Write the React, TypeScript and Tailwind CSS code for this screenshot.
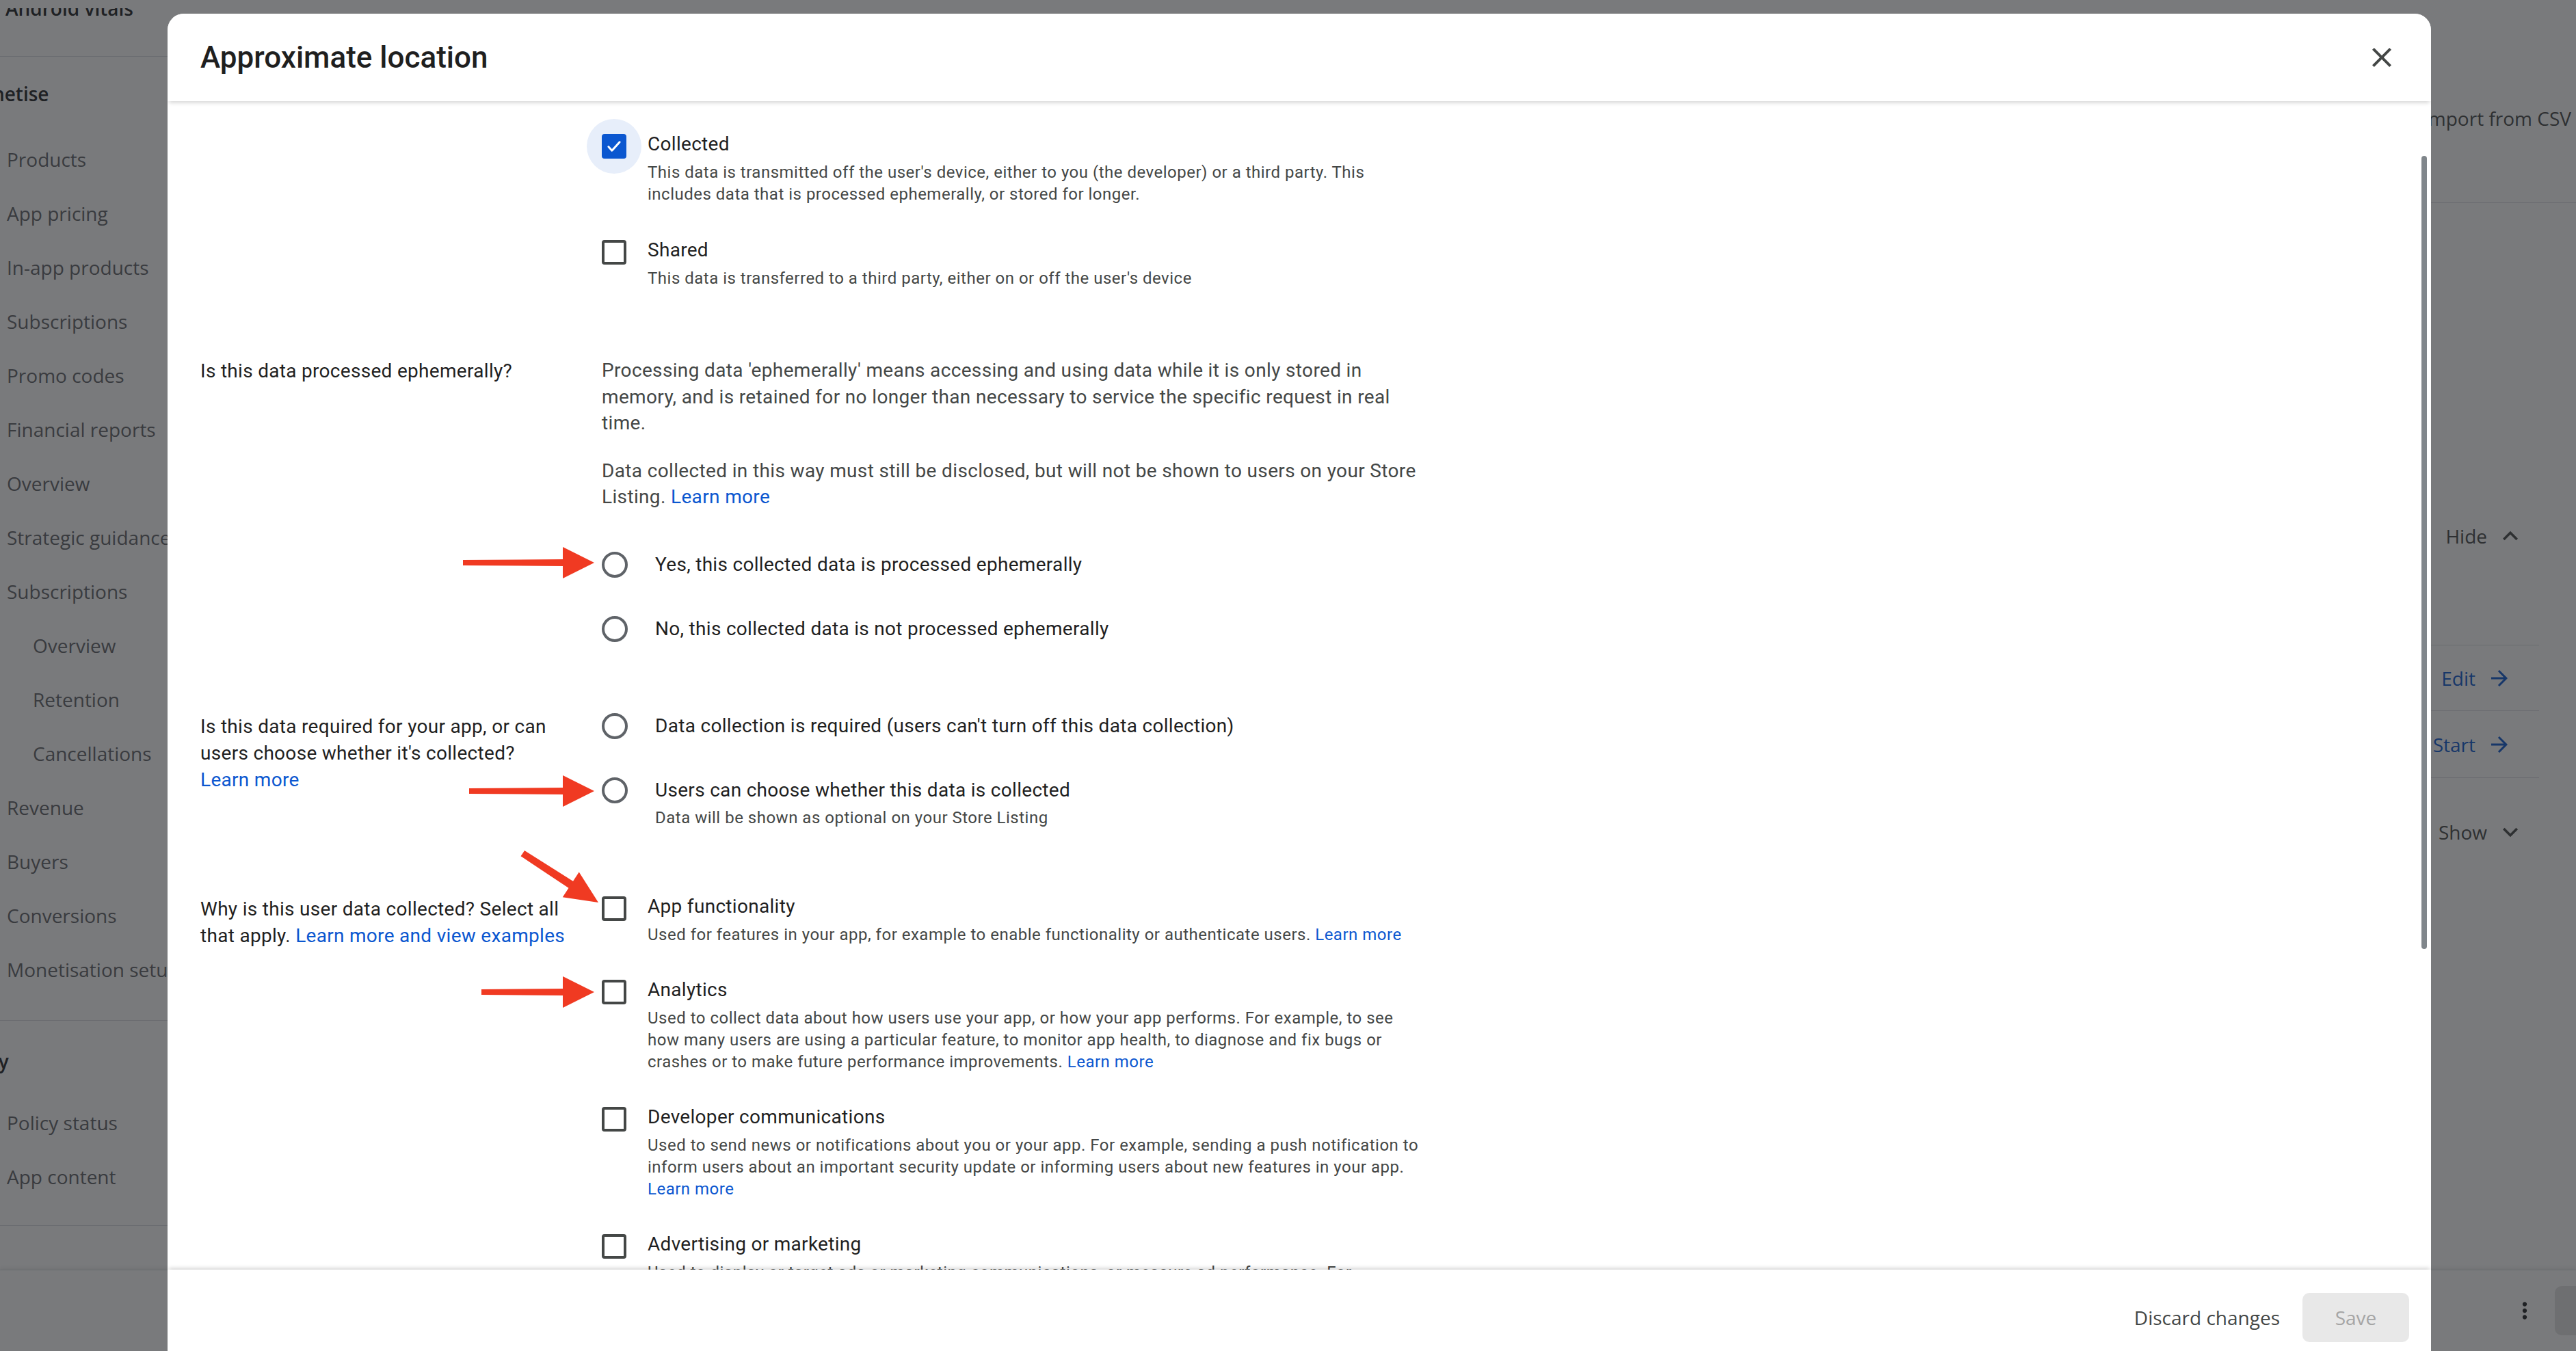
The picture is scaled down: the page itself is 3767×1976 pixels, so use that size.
import type { ReactNode } from 'react';

const NAV_ITEMS = [
  { label: 'Products' },
  { label: 'App pricing' },
  { label: 'In-app products' },
  { label: 'Subscriptions' },
  { label: 'Promo codes' },
  { label: 'Financial reports' },
  { label: 'Overview' },
  { label: 'Strategic guidance' },
  { label: 'Subscriptions' },
  { label: 'Overview', indent: true },
  { label: 'Retention', indent: true },
  { label: 'Cancellations', indent: true },
  { label: 'Revenue' },
  { label: 'Buyers' },
  { label: 'Conversions' },
  { label: 'Monetisation setup' },
];

function Checkbox({ checked = false }: { checked?: boolean }) {
  return (
    <div className="relative mt-[4px] h-[36px] w-[36px] shrink-0">
      {checked && <div className="absolute -left-[22px] -top-[22px] h-[80px] w-[80px] rounded-full bg-[#e7eefa]" />}
      {checked ? (
        <div className="relative flex h-full w-full items-center justify-center rounded-[4px] bg-[#0b57d0]">
          <svg width="30" height="30" viewBox="0 0 24 24" fill="none">
            <path d="M5.5 12.5l4 4.5L18.5 7" stroke="white" strokeWidth="2.4" strokeLinecap="round" strokeLinejoin="round" />
          </svg>
        </div>
      ) : (
        <div className="h-full w-full rounded-[4px] border-[4px] border-[#444746]" />
      )}
    </div>
  );
}

function CheckOption({ label, checked, children }: { label: string; checked?: boolean; children: ReactNode }) {
  return (
    <div className="flex gap-[31px]">
      <Checkbox checked={checked} />
      <div className="flex-1">
        <div className="text-[28px] leading-[38px] tracking-[0.3px] text-[#1f1f1f]">{label}</div>
        <div className="mt-[6px] text-[24px] leading-[32px] tracking-[0.5px] text-[#444746]">{children}</div>
      </div>
    </div>
  );
}

function Radio({ label, desc }: { label: string; desc?: string }) {
  return (
    <div className="flex gap-[40px]">
      <div className="h-[38px] w-[38px] shrink-0 rounded-full border-[4px] border-[#5f6368]" />
      <div>
        <div className="text-[28px] leading-[38px] tracking-[0.3px] text-[#1f1f1f]">{label}</div>
        {desc && <div className="mt-[5px] text-[24px] leading-[32px] tracking-[0.5px] text-[#444746]">{desc}</div>}
      </div>
    </div>
  );
}

function Link({ children, block = false }: { children: ReactNode; block?: boolean }) {
  return <a className={`text-[#0b57d0] ${block ? 'block' : ''}`}>{children}</a>;
}

function Section({ label, className = '', children }: { label?: ReactNode; className?: string; children: ReactNode }) {
  return (
    <div className={`flex ${className}`}>
      <div className="w-[587px] shrink-0 pr-[42px] text-[28px] leading-[39px] tracking-[0.3px] text-[#1f1f1f]">{label}</div>
      <div className="w-[1196px]">{children}</div>
    </div>
  );
}

function Annotations() {
  const straight = (x1: number, tip: number, y: number) => (
    <g>
      <polygon points={`${x1},${y - 4} ${tip - 44},${y - 5} ${tip - 44},${y + 5} ${x1},${y + 4}`} fill="#f03a22" />
      <polygon points={`${tip - 46},${y - 23} ${tip},${y} ${tip - 46},${y + 23}`} fill="#f03a22" />
    </g>
  );
  return (
    <svg className="pointer-events-none absolute left-0 top-0" width="3767" height="1976">
      {straight(677, 869, 823)}
      {straight(686, 869, 1157)}
      {straight(704, 869, 1451)}
      <g transform="translate(875 1320) rotate(33)">
        <polygon points="-132,-5 -44,-6 -44,6 -132,5" fill="#f03a22" />
        <polygon points="-48,-22 0,0 -48,22" fill="#f03a22" />
      </g>
    </svg>
  );
}

export default function App() {
  return (
    <div className="relative h-screen w-full overflow-hidden bg-white font-['Open_Sans',sans-serif]">
      {/* page behind the dialog */}
      <div className="flex h-full">
        <nav className="flex w-[600px] shrink-0 flex-col">
          <div className="h-[83px] border-b border-[#dadce0] pt-[12px]">
            <div className="h-[11px] overflow-hidden pl-[8px]">
              <div className="-mt-[19px] text-[28px] font-semibold leading-[38px] text-[#202124]">Android vitals</div>
            </div>
          </div>
          <div className="border-b border-[#dadce0] pb-[35px] pt-[35px]">
            <div className="-ml-[54px] mb-[37px] text-[28px] font-semibold leading-[38px] text-[#202124]">Monetise</div>
            {NAV_ITEMS.map((item, i) => (
              <div
                key={i}
                className={`flex h-[79px] items-center whitespace-nowrap text-[28px] font-medium text-[#5f6368] ${item.indent ? 'pl-[48px]' : 'pl-[10px]'}`}
              >
                {item.label}
              </div>
            ))}
          </div>
          <div className="border-b border-[#dadce0] pb-[32px] pt-[40px]">
            <div className="-ml-[66px] mb-[31px] text-[28px] font-semibold leading-[38px] text-[#202124]">Policy</div>
            <div className="flex h-[79px] items-center pl-[10px] text-[28px] font-medium text-[#5f6368]">Policy status</div>
            <div className="flex h-[79px] items-center pl-[10px] text-[28px] font-medium text-[#5f6368]">App content</div>
          </div>
        </nav>

        <main className="flex flex-1 flex-col">
          <div className="flex h-[297px] justify-end border-b border-[#dadce0] pr-[7px] pt-[154px]">
            <span className="text-[28px] font-medium leading-[38px] text-[#444746]">Import from CSV</span>
          </div>
          <div className="mr-[54px] flex flex-col">
            <div className="flex h-[647px] justify-end border-b border-[#dadce0] pr-[20px] pt-[468px]">
              <div className="flex h-[38px] items-center gap-[12px] text-[28px] font-medium text-[#444746]">
                Hide
                <svg width="44" height="44" viewBox="0 0 24 24" fill="#444746">
                  <path d="M12 8l-6 6 1.41 1.41L12 10.83l4.59 4.58L18 14z" />
                </svg>
              </div>
            </div>
            {['Edit', 'Start'].map((t, i) => (
              <div
                key={t}
                className={`flex items-center justify-end border-b border-[#dadce0] pr-[40px] ${i === 0 ? 'h-[96px]' : 'h-[98px]'}`}
              >
                <div className="flex items-center gap-[17px] text-[28px] font-medium text-[#0b57d0]">
                  {t}
                  <svg width="36" height="36" viewBox="0 0 24 24" fill="#0b57d0">
                    <path d="M12 4l-1.41 1.41L16.17 11H4v2h12.17l-5.58 5.59L12 20l8-8z" />
                  </svg>
                </div>
              </div>
            ))}
            <div className="flex justify-end pr-[20px] pt-[60px]">
              <div className="flex h-[38px] items-center gap-[12px] text-[28px] font-medium text-[#444746]">
                Show
                <svg width="44" height="44" viewBox="0 0 24 24" fill="#444746">
                  <path d="M16.59 8.59L12 13.17 7.41 8.59 6 10l6 6 6-6z" />
                </svg>
              </div>
            </div>
          </div>
        </main>
      </div>

      {/* sticky page action bar */}
      <div className="absolute bottom-0 left-0 right-0 flex h-[119px] items-center justify-end overflow-hidden border-t border-[#dadce0] bg-white shadow-[0_-3px_6px_rgba(0,0,0,0.08)]">
        <svg width="38" height="38" viewBox="0 0 24 24" fill="#202124" className="mr-[25px]">
          <path d="M12 8c1.1 0 2-.9 2-2s-.9-2-2-2-2 .9-2 2 .9 2 2 2zm0 2c-1.1 0-2 .9-2 2s.9 2 2 2 2-.9 2-2-.9-2-2-2zm0 6c-1.1 0-2 .9-2 2s.9 2 2 2 2-.9 2-2-.9-2-2-2z" />
        </svg>
        <div className="-mr-[125px] h-[72px] w-[156px] shrink-0 rounded-[10px] bg-[#e3e3e3]" />
      </div>

      {/* scrim */}
      <div className="absolute inset-0 bg-[#202124]/60" />

      {/* dialog */}
      <div className="absolute left-[245px] top-[20px] flex h-[1976px] w-[3310px] flex-col overflow-hidden rounded-t-[24px] bg-white font-['Roboto',sans-serif]">
        <div className="relative z-10 flex h-[128px] shrink-0 items-center justify-between bg-white pl-[48px] pr-[48px] shadow-[0_4px_6px_-2px_rgba(0,0,0,0.18)]">
          <h1 className="text-[44px] font-medium text-[#1f1f1f]">Approximate location</h1>
          <svg width="48" height="48" viewBox="0 0 24 24" fill="#444746">
            <path d="M19 6.41L17.59 5 12 10.59 6.41 5 5 6.41 10.59 12 5 17.59 6.41 19 12 13.41 17.59 19 19 17.59 13.41 12z" />
          </svg>
        </div>

        <div className="relative flex-1 overflow-hidden pl-[48px] pt-[44px]">
          <Section>
            <div className="flex flex-col gap-[47px]">
              <CheckOption label="Collected" checked>
                This data is transmitted off the user's device, either to you (the developer) or a third party. This includes data that is processed ephemerally, or stored for longer.
              </CheckOption>
              <CheckOption label="Shared">
                This data is transferred to a third party, either on or off the user's device
              </CheckOption>
            </div>
          </Section>

          <Section className="mt-[100px]" label="Is this data processed ephemerally?">
            <p className="text-[28px] leading-[38.5px] tracking-[0.35px] text-[#444746]">
              Processing data 'ephemerally' means accessing and using data while it is only stored in memory, and is retained for no longer than necessary to service the specific request in real time.
            </p>
            <p className="mt-[31px] text-[28px] leading-[38.5px] tracking-[0.35px] text-[#444746]">
              Data collected in this way must still be disclosed, but will not be shown to users on your Store Listing. <Link>Learn more</Link>
            </p>
            <div className="mt-[60px] flex flex-col gap-[56px]">
              <Radio label="Yes, this collected data is processed ephemerally" />
              <Radio label="No, this collected data is not processed ephemerally" />
            </div>
          </Section>

          <Section
            className="mt-[104px]"
            label={
              <>
                Is this data required for your app, or can users choose whether it's collected?
                <Link block>Learn more</Link>
              </>
            }
          >
            <div className="flex flex-col gap-[56px]">
              <Radio label="Data collection is required (users can't turn off this data collection)" />
              <Radio label="Users can choose whether this data is collected" desc="Data will be shown as optional on your Store Listing" />
            </div>
          </Section>

          <Section
            className="mt-[95px]"
            label={
              <div className="pt-[3px]">
                Why is this user data collected? Select all that apply. <Link>Learn more and view examples</Link>
              </div>
            }
          >
            <div className="flex flex-col gap-[46px]">
              <CheckOption label="App functionality">
                Used for features in your app, for example to enable functionality or authenticate users. <Link>Learn more</Link>
              </CheckOption>
              <CheckOption label="Analytics">
                Used to collect data about how users use your app, or how your app performs. For example, to see how many users are using a particular feature, to monitor app health, to diagnose and fix bugs or crashes or to make future performance improvements. <Link>Learn more</Link>
              </CheckOption>
              <CheckOption label="Developer communications">
                Used to send news or notifications about you or your app. For example, sending a push notification to inform users about an important security update or informing users about new features in your app. <Link>Learn more</Link>
              </CheckOption>
              <CheckOption label="Advertising or marketing">
                Used to display or target ads or marketing communications, or measure ad performance. For example, displaying ads in your app, sending push notifications to promote other products or services, or sharing data with advertising partners. <Link>Learn more</Link>
              </CheckOption>
            </div>
          </Section>

          <div className="absolute right-[6px] top-[80px] h-[1160px] w-[8px] rounded-full bg-[#80868b]" />
        </div>

        <div className="relative z-10 flex h-[139px] shrink-0 items-center justify-end gap-[9px] bg-white pr-[32px] font-['Open_Sans',sans-serif] shadow-[0_-4px_6px_-2px_rgba(0,0,0,0.18)]">
          <button className="px-[24px] text-[28px] font-medium text-[#444746]">Discard changes</button>
          <button className="h-[72px] w-[156px] rounded-[10px] bg-[#e8e8e8] text-[28px] font-medium text-[#a5a5a5]">Save</button>
        </div>
      </div>

      <Annotations />
    </div>
  );
}
